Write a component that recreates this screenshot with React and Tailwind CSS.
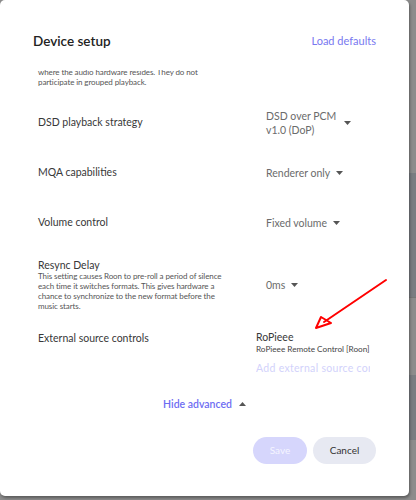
import { useState } from 'react';

// Small dropdown caret used next to each select value
function Caret({ up = false }) {
  return (
    <svg width="7" height="4" viewBox="0 0 7 4" className="shrink-0">
      <path d={up ? 'M0 4 L3.5 0 L7 4 Z' : 'M0 0 L7 0 L3.5 4 Z'} fill="#555" />
    </svg>
  );
}

function SelectValue({ children, width }) {
  return (
    <div className="flex items-center gap-[6px] pl-[10px] text-[10.5px] leading-[14px] text-[#6b6b6b]">
      <span className={width}>{children}</span>
      <Caret />
    </div>
  );
}

function Row({ label, children, className = 'h-[50px]' }) {
  return (
    <div className={`flex items-center ${className}`}>
      <div className="w-[218px] text-[10.5px] text-[#383838]">{label}</div>
      <div className="flex-1">{children}</div>
    </div>
  );
}

export default function App() {
  const [advanced, setAdvanced] = useState(true);

  return (
    <div
      className="flex h-[500px] w-[416px] overflow-hidden bg-[#8c8c8c]"
      style={{ fontFamily: 'Lato, "Noto Sans", sans-serif' }}
    >
      {/* ---- Dialog ---- */}
      <div className="relative flex h-[496px] w-[409px] shrink-0 flex-col rounded-[5px] bg-white shadow-[1px_2px_3px_rgba(0,0,0,0.35)]">
        <header className="flex items-center justify-between pl-[33px] pr-[33px] pt-[31px] pb-[18px]">
          <h1 className="text-[13.5px] font-semibold leading-[21px] text-[#222]">Device setup</h1>
          <button className="text-[11px] text-[#7878f0]">Load defaults</button>
        </header>

        {/* ---- Scrolling settings area ---- */}
        <div className="h-[314px] overflow-hidden pl-[38px] pr-[39px]">
          <p className="-mt-[3px] w-[175px] text-[8px] leading-[10px] tracking-[-0.1px] text-[#555]">
            where the audio hardware resides. They do not participate in grouped playback.
          </p>

          <div className="mt-[11px]">
            <Row label="DSD playback strategy">
              <SelectValue width="w-[72px]">DSD over PCM v1.0 (DoP)</SelectValue>
            </Row>
            <Row label="MQA capabilities">
              <SelectValue>Renderer only</SelectValue>
            </Row>
            <Row label="Volume control" className="h-[49px]">
              <SelectValue>Fixed volume</SelectValue>
            </Row>

            <div className="mt-[12px] flex items-center">
              <div className="w-[218px]">
                <div className="text-[10.5px] leading-[12px] text-[#383838]">Resync Delay</div>
                <p className="w-[198px] text-[8px] leading-[10px] tracking-[-0.1px] text-[#555]">
                  This setting causes Roon to pre-roll a period of silence each time it switches
                  formats. This gives hardware a chance to synchronize to the new format before the
                  music starts.
                </p>
              </div>
              <SelectValue>0ms</SelectValue>
            </div>

            <div className="mt-[19px] flex items-start">
              <div className="w-[218px] pt-[1px] text-[10.5px] leading-[14px] text-[#383838]">
                External source controls
              </div>
              <div className="w-[114px] overflow-hidden whitespace-nowrap">
                <div className="text-[10.5px] leading-[14px] text-[#383838]">RoPieee</div>
                <div className="text-[8.2px] leading-[11px] text-[#444]">RoPieee Remote Control [Roon]</div>
                <div className="mt-[6px] text-[10.5px] leading-[14px] tracking-[0.3px] text-[#d2d2fb]">
                  Add external source controls
                </div>
              </div>
            </div>
          </div>
        </div>

        <button
          onClick={() => setAdvanced(!advanced)}
          className="mx-auto mt-[12px] flex items-center gap-[7px] text-[10.5px] font-semibold leading-[16px] text-[#6d6df2]"
        >
          Hide advanced
          <Caret up />
        </button>

        <div className="mt-[25px] flex justify-end gap-[6px] pr-[33px]">
          <button className="h-[27px] w-[54px] rounded-full bg-[#d6d6fc] text-[10px] text-[#f5f5ff]">
            Save
          </button>
          <button className="h-[27px] w-[63px] rounded-full bg-[#e7e9f2] text-[10px] text-[#333]">
            Cancel
          </button>
        </div>

        {/* annotation arrow */}
        <svg className="pointer-events-none absolute left-0 top-0" width="409" height="496">
          <g stroke="#ff0000" strokeWidth="2" fill="none" strokeLinecap="round" strokeLinejoin="round">
            <line x1="386" y1="280" x2="324" y2="322" />
            <path d="M316 328 L321 317 L331 323 Z" />
          </g>
        </svg>
      </div>

      {/* ---- Page behind the dialog ---- */}
      <div className="flex flex-1 flex-col">
        <div className="h-[173px]" />
        <div className="h-[125px] border-b border-[#777] bg-[#7a7d82]" />
        <div className="h-[77px]" />
        <div className="h-[65px] bg-[#7a7d82]" />
      </div>
    </div>
  );
}
